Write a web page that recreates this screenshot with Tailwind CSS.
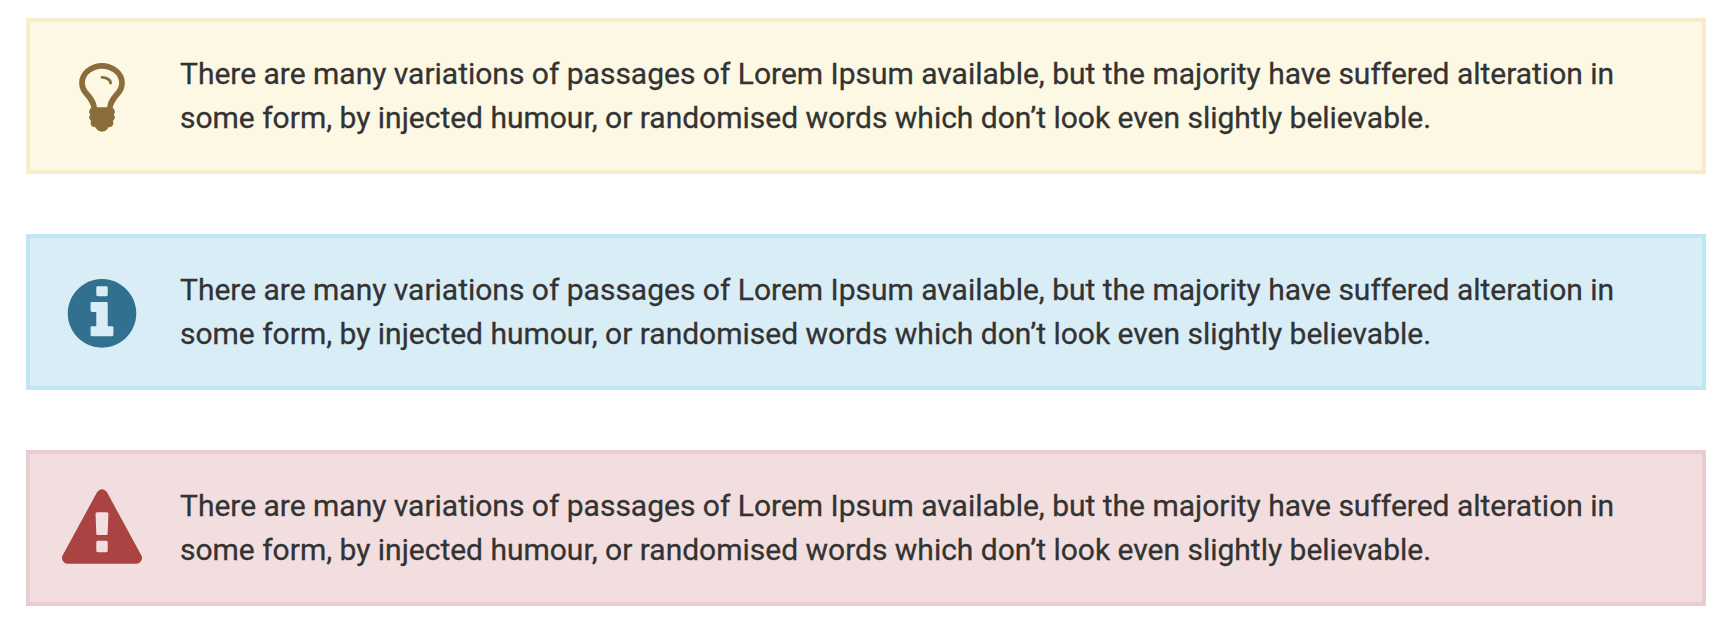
<!DOCTYPE html>
<html lang="en">
<head>
<meta charset="utf-8">
<title>Alerts</title>
<script src="https://cdn.jsdelivr.net/npm/@tailwindcss/browser@4"></script>
</head>
<body class="bg-white font-['Roboto',sans-serif] text-[30px] leading-[44px] tracking-[-0.01px] text-[#333333] [-webkit-text-stroke:0.3px_#333333]">
<main class="flex flex-col gap-[60px] pt-[18px] pl-[26px] pr-5">
  <div class="flex h-[156px] items-start gap-[38px] border-4 border-[#faebcc] bg-[#fcf8e3] pt-[30px] pl-8">
    <svg class="mt-[5px] size-20 shrink-0 fill-[#8a6d3b]" viewBox="0 -8 1792 1792" aria-hidden="true"><path d="M1120 576q0 13-9.5 22.5t-22.5 9.5-22.5-9.5-9.5-22.5q0-46-54-71t-106-25q-13 0-22.5-9.5t-9.5-22.5 9.5-22.5 22.5-9.5q50 0 99.5 16t87 54 37.5 90zm160 0q0-72-34.5-134t-90-101.5-123-62-136.5-22.5-136.5 22.5-123 62-90 101.5-34.5 134q0 101 68 180 10 11 30.5 33t30.5 33q128 153 141 298h228q13-145 141-298 10-11 30.5-33t30.5-33q68-79 68-180zm128 0q0 155-103 268-45 49-74.5 87t-59.5 95.5-34 107.5q47 28 47 82 0 37-25 64 25 27 25 64 0 52-45 81 13 23 13 47 0 46-31.5 71t-77.5 25q-20 44-60 70t-87 26-87-26-60-70q-46 0-77.5-25t-31.5-71q0-24 13-47-45-29-45-81 0-37 25-64-25-27-25-64 0-54 47-82-4-50-34-107.5t-59.5-95.5-74.5-87q-103-113-103-268 0-99 44.5-184.5t117-142 164-89 186.5-32.5 186.5 32.5 164 89 117 142 44.5 184.5z"/></svg>
    <p class="whitespace-nowrap">There are many variations of passages of Lorem Ipsum available, but the majority have suffered alteration in<br>some form, by injected humour, or randomised words which don’t look even slightly believable.</p>
  </div>
  <div class="flex h-[156px] items-start gap-[38px] border-4 border-[#bce8f1] bg-[#d9edf7] pt-[30px] pl-8">
    <svg class="mt-[5px] size-20 shrink-0 fill-[#31708f]" viewBox="0 -8 1792 1792" aria-hidden="true"><path d="M1152 1376v-160q0-14-9-23t-23-9h-96v-512q0-14-9-23t-23-9h-320q-14 0-23 9t-9 23v160q0 14 9 23t23 9h96v320h-96q-14 0-23 9t-9 23v160q0 14 9 23t23 9h448q14 0 23-9t9-23zm-128-896v-160q0-14-9-23t-23-9h-192q-14 0-23 9t-9 23v160q0 14 9 23t23 9h192q14 0 23-9t9-23zm640 416q0 209-103 385.5t-279.5 279.5-385.5 103-385.5-103-279.5-279.5-103-385.5 103-385.5 279.5-279.5 385.5-103 385.5 103 279.5 279.5 103 385.5z"/></svg>
    <p class="whitespace-nowrap">There are many variations of passages of Lorem Ipsum available, but the majority have suffered alteration in<br>some form, by injected humour, or randomised words which don’t look even slightly believable.</p>
  </div>
  <div class="flex h-[156px] items-start gap-[38px] border-4 border-[#ebccd1] bg-[#f2dede] pt-[30px] pl-8">
    <svg class="mt-[5px] size-20 shrink-0 fill-[#a94442]" viewBox="0 -8 1792 1792" aria-hidden="true"><path d="M1024 1375v-190q0-14-9.5-23.5t-22.5-9.5h-192q-13 0-22.5 9.5t-9.5 23.5v190q0 14 9.5 23.5t22.5 9.5h192q13 0 22.5-9.5t9.5-23.5zm-2-374l18-459q0-12-10-19-13-11-24-11h-220q-11 0-24 11-10 7-10 21l17 457q0 10 10 16.5t24 6.5h185q14 0 23.5-6.5t10.5-16.5zm-14-934l768 1408q35 63-2 126-17 29-46.5 46t-63.5 17h-1536q-34 0-63.5-17t-46.5-46q-37-63-2-126l768-1408q17-31 47-49t65-18 65 18 47 49z"/></svg>
    <p class="whitespace-nowrap">There are many variations of passages of Lorem Ipsum available, but the majority have suffered alteration in<br>some form, by injected humour, or randomised words which don’t look even slightly believable.</p>
  </div>
</main>
</body>
</html>
